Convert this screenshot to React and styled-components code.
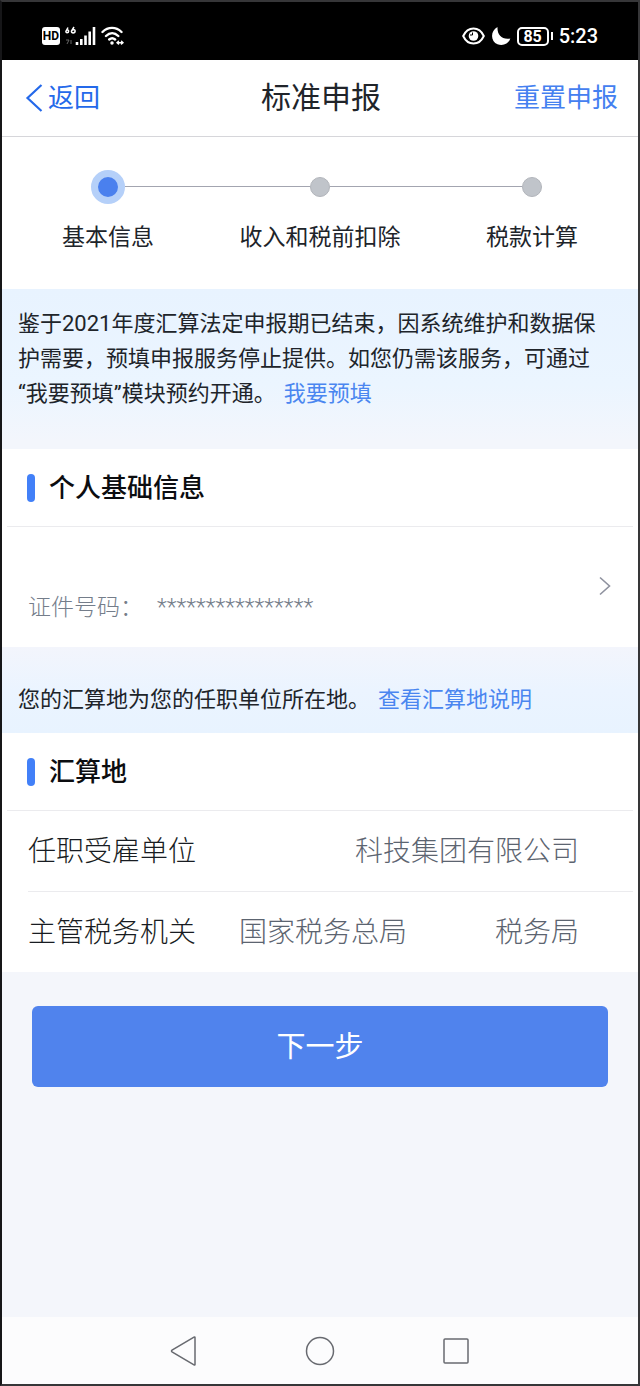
import React from "react";
import styled, { createGlobalStyle } from "styled-components";

const GlobalStyle = createGlobalStyle`
  * { box-sizing: border-box; }
  body {
    margin: 0;
    background: #f4f6fb;
    color: #20242a;
    font-family: Roboto, "Noto Sans CJK SC", sans-serif;
  }
  button { font: inherit; padding: 0; border: 0; background: none; cursor: pointer; }
  a { color: #4a86f0; text-decoration: none; }
  h1, h2, p, dl, dt, dd, ol { margin: 0; padding: 0; font-weight: 400; }
`;

const Screen = styled.div`
  min-height: 100vh;
  display: flex;
  flex-direction: column;
  border: 2px solid #363638;
  border-left-color: #161618;
`;

const StatusBar = styled.header`
  height: 58px;
  padding: 10px 40px 0;
  display: flex;
  align-items: center;
  justify-content: space-between;
  background: #000;
  color: #fff;
`;

const StatusGroup = styled.div`
  display: flex;
  align-items: center;
  gap: ${(p) => p.$gap}px;
  svg { display: block; }
`;

const HdBadge = styled.span`
  width: 18px;
  height: 18px;
  border-radius: 3px;
  background: #fff;
  color: #000;
  font-size: 12px;
  font-weight: 700;
  line-height: 18px;
  text-align: center;
`;

const Battery = styled.span`
  display: flex;
  align-items: center;
  gap: 2px;
  &::after {
    content: "";
    width: 2px;
    height: 8px;
    background: #fff;
  }
`;

const BatteryBody = styled.span`
  width: 32px;
  height: 19px;
  border: 2px solid #fff;
  border-radius: 5px;
  font-size: 16px;
  font-weight: 700;
  line-height: 15px;
  text-align: center;
`;

const Clock = styled.time`
  font-size: 20px;
  font-weight: 500;
  line-height: 24px;
`;

const TitleBar = styled.nav`
  height: 77px;
  padding: 0 20px 0 22px;
  display: grid;
  grid-template-columns: 1fr auto 1fr;
  align-items: center;
  background: #fff;
  border-bottom: 1px solid #d6d6da;
`;

const PageTitle = styled.h1`
  font-size: 30px;
  line-height: 40px;
`;

const BarButton = styled.button`
  justify-self: ${(p) => (p.$end ? "end" : "start")};
  display: flex;
  align-items: center;
  color: ${(p) => (p.$end ? "#4480f0" : "#2469ea")};
  font-size: 26px;
  line-height: 40px;
`;

const Steps = styled.ol`
  height: 152px;
  padding-top: 32px;
  display: grid;
  grid-template-columns: repeat(3, 1fr);
  background: #fff;
  list-style: none;
`;

const Step = styled.li`
  display: flex;
  flex-direction: column;
  gap: 17px;
  text-align: center;
  font-size: 23px;
  line-height: 34px;
`;

const Track = styled.div`
  height: 35px;
  display: flex;
  align-items: center;
`;

const Line = styled.span`
  flex: 1;
  height: 1px;
  background: ${(p) => (p.$hidden ? "transparent" : "#a3a5b0")};
`;

const Dot = styled.span`
  width: ${(p) => (p.$active ? 34 : 20)}px;
  height: ${(p) => (p.$active ? 34 : 20)}px;
  border-radius: 50%;
  border: ${(p) => (p.$active ? "7px solid #b5d0f9" : "1px solid #b2b5bb")};
  background: ${(p) => (p.$active ? "#4a80ee" : "#c0c4ca")};
`;

const Notice = styled.p`
  padding: ${(p) => (p.$long ? "17px 36px 38px 16px" : "35px 36px 16px 16px")};
  background: ${(p) =>
    p.$long
      ? "linear-gradient(#e8f3ff, #ebf5ff 60%, #f3f6fc 95%)"
      : "linear-gradient(#f3f5fc, #ebf4ff 50%, #e8f3ff)"};
  font-size: 22px;
  line-height: 35px;
  a { display: inline-block; margin-left: 8px; }
`;

const Card = styled.section`
  background: #fff;
`;

const CardTitle = styled.h2`
  height: 78px;
  margin: 0 5px;
  padding-left: 20px;
  display: flex;
  align-items: center;
  gap: 14px;
  border-bottom: 1px solid #ebebee;
  color: #0c0d10;
  font-size: 26px;
  font-weight: 500;
  line-height: 36px;
  &::before {
    content: "";
    width: 8px;
    height: 28px;
    border-radius: 4px;
    background: #4280f8;
  }
`;

const IdentityRow = styled.button`
  width: 100%;
  height: 120px;
  padding: 0 26px 2px;
  display: flex;
  align-items: center;
  justify-content: space-between;
  color: #747d8a;
  font-size: 23px;
  line-height: 34px;
`;

const IdentityText = styled.span`
  padding-top: 44px;
  display: flex;
  gap: 14px;
  font-weight: 300;
`;

const Fields = styled.dl`
  padding-left: 26px;
`;

const Field = styled.div`
  min-height: 80px;
  padding-top: 2px;
  margin-right: 5px;
  padding-right: 54px;
  display: flex;
  align-items: center;
  justify-content: space-between;
  font-size: 28px;
  line-height: 40px;
  & + & {
    min-height: 81px;
    border-top: 1px solid #ebebee;
  }
  dt { color: #181c22; font-weight: 300; }
  dd { display: flex; gap: 88px; color: #5c6470; font-weight: 300; }
`;

const Actions = styled.div`
  flex: 1;
  padding: 34px 30px;
`;

const NextButton = styled.button`
  width: 100%;
  height: 81px;
  border-radius: 6px;
  background: #5083ed;
  color: #fff;
  font-size: 29px;
  line-height: 40px;
`;

const SystemNav = styled.nav`
  height: 67px;
  display: flex;
  align-items: center;
  justify-content: center;
  gap: 106px;
  background: #fcfcfd;
  svg { display: block; fill: none; stroke: #686a70; stroke-width: 1.5; }
`;

const steps = ["基本信息", "收入和税前扣除", "税款计算"];

const fields = [
  { label: "任职受雇单位", value: ["科技集团有限公司"] },
  { label: "主管税务机关", value: ["国家税务总局", "税务局"] },
];

function SignalIcon() {
  return (
    <svg width="31" height="20" viewBox="0 0 31 20" fill="none" stroke="#fff">
      <path d="M3 1.500 1 5.200c-.6 2 2.600 2 2.600 0S1 4 1 5.200M9 1 6.500 5c-.5 2.500 3.600 2.500 3.600 0S7 4 6.500 5" strokeWidth="1.500" />
      <path d="M1 14h3l-2 4M6 14v4" stroke="#666" />
      <path d="M12 16v3M16.300 13v6M20.500 9.500v9.500M24.700 5.500v13.500M29 1v18" strokeWidth="2.600" />
    </svg>
  );
}

function WifiIcon() {
  return (
    <svg width="24" height="20" viewBox="0 0 24 20" fill="none" stroke="#fff" strokeWidth="2.400" strokeLinecap="round">
      <path d="M1.500 6c5.500-5.500 13.500-5.500 19 0M5 10c3.800-3.600 8.500-3.600 12.300 0M8.200 13.500c1.900-1.700 4-1.700 5.900 0" />
      <circle cx="11" cy="17" r="1" fill="#fff" strokeWidth="1.500" />
      <path d="m17.500 15.300-1.500 1.400 1.500 1.400M20.500 15.300l1.500 1.400-1.500 1.400M17 16.700h4" strokeWidth="1.400" />
    </svg>
  );
}

function EyeIcon() {
  return (
    <svg width="23" height="20" viewBox="0 0 23 20" fill="none" stroke="#fff" strokeWidth="2">
      <path d="M1.200 10C3.500 5 7 2.500 11.500 2.500S19.500 5 21.800 10C19.500 15 16 17.500 11.500 17.500S3.500 15 1.200 10Z" />
      <circle cx="11.500" cy="10" r="4.800" fill="#fff" stroke="none" />
      <path d="M10.500 6.500v2.500h-2.500" stroke="#000" strokeWidth="1" />
    </svg>
  );
}

function MoonIcon() {
  return (
    <svg width="20" height="20" viewBox="0 0 20 20" fill="#fff">
      <path d="M6.500 1C-1 5-.5 15.500 6.500 18.300c5 2 11 0 12.800-5.800C11 14 6 9 6.500 1Z" />
    </svg>
  );
}

export default function App() {
  return (
    <>
      <GlobalStyle />
      <Screen>
        <StatusBar>
          <StatusGroup $gap={5}>
            <HdBadge>HD</HdBadge>
            <SignalIcon />
            <WifiIcon />
          </StatusGroup>
          <StatusGroup $gap={6}>
            <EyeIcon />
            <MoonIcon />
            <Battery>
              <BatteryBody>85</BatteryBody>
            </Battery>
            <Clock>5:23</Clock>
          </StatusGroup>
        </StatusBar>

        <TitleBar>
          <BarButton type="button">
            <svg width="24" height="30" viewBox="0 0 24 30" fill="none" stroke="currentColor" strokeWidth="2.200">
              <path d="M17.500 2 3.500 15l14 13" />
            </svg>
            返回
          </BarButton>
          <PageTitle>标准申报</PageTitle>
          <BarButton type="button" $end>重置申报</BarButton>
        </TitleBar>

        <Steps>
          {steps.map((name, i) => (
            <Step key={name} aria-current={i === 0 ? "step" : undefined}>
              <Track>
                <Line $hidden={i === 0} />
                <Dot $active={i === 0} />
                <Line $hidden={i === steps.length - 1} />
              </Track>
              {name}
            </Step>
          ))}
        </Steps>

        <Notice $long>
          鉴于2021年度汇算法定申报期已结束，因系统维护和数据保护需要，预填申报服务停止提供。如您仍需该服务，可通过
          <wbr />
          “我要预填”模块预约开通。
          <a href="#prefill">我要预填</a>
        </Notice>

        <Card>
          <CardTitle>个人基础信息</CardTitle>
          <IdentityRow type="button">
            <IdentityText>
              <span>证件号码：</span>
              <span>****************</span>
            </IdentityText>
            <svg width="14" height="20" viewBox="0 0 14 20" fill="none" stroke="#8f929f" strokeWidth="1.600">
              <path d="m2 1.500 9.500 8.500L2 18.500" />
            </svg>
          </IdentityRow>
        </Card>

        <Notice>
          您的汇算地为您的任职单位所在地。
          <a href="#location-help">查看汇算地说明</a>
        </Notice>

        <Card>
          <CardTitle>汇算地</CardTitle>
          <Fields>
            {fields.map(({ label, value }) => (
              <Field key={label}>
                <dt>{label}</dt>
                <dd>
                  {value.map((part) => (
                    <span key={part}>{part}</span>
                  ))}
                </dd>
              </Field>
            ))}
          </Fields>
        </Card>

        <Actions>
          <NextButton type="button">下一步</NextButton>
        </Actions>

        <SystemNav>
          <button type="button" aria-label="Back">
            <svg width="30" height="30" viewBox="0 0 30 30">
              <path d="M26 1.500v27q0 1-1 .4L3 15.800q-1-.8 0-1.600L25 1.100q1-.6 1 .4Z" />
            </svg>
          </button>
          <button type="button" aria-label="Home">
            <svg width="30" height="30" viewBox="0 0 30 30">
              <circle cx="15" cy="15" r="13.500" />
            </svg>
          </button>
          <button type="button" aria-label="Recent apps">
            <svg width="30" height="30" viewBox="0 0 30 30">
              <rect x="3" y="3" width="24" height="24" rx="1" />
            </svg>
          </button>
        </SystemNav>
      </Screen>
    </>
  );
}
